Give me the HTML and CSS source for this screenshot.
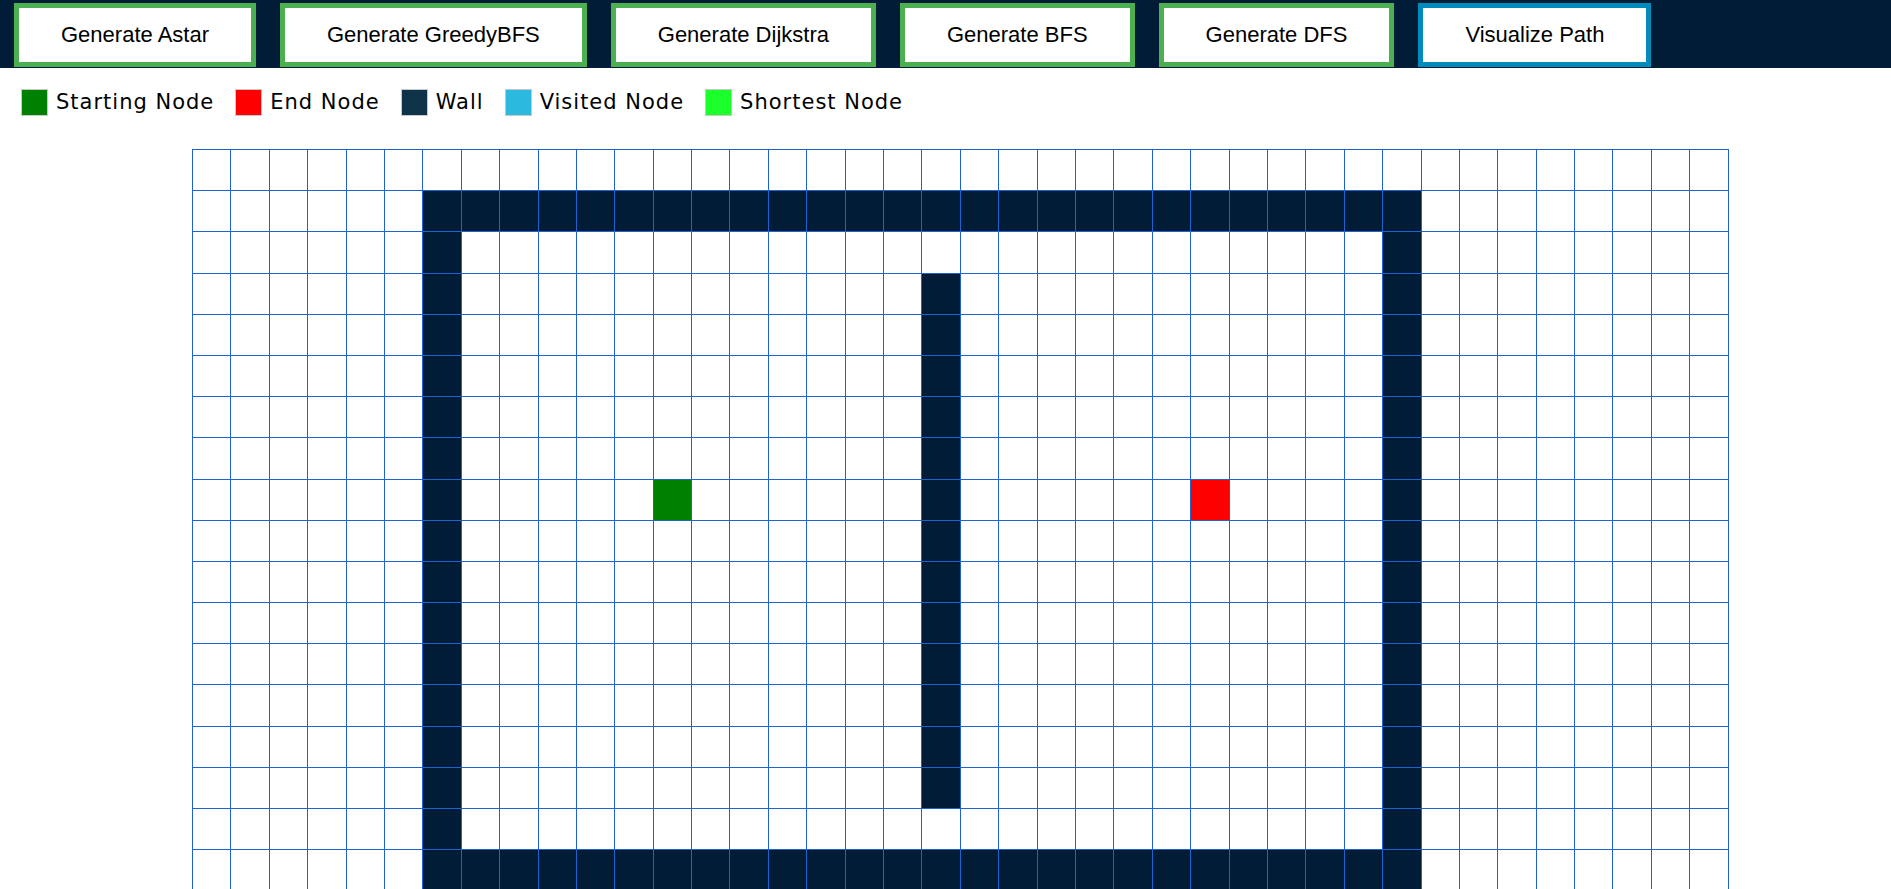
FILE: index.html
```html
<!DOCTYPE html>
<html lang="en">
<head>
<meta charset="utf-8">
<title>Path Visualizer</title>
<link rel="stylesheet" href="styles.css">
</head>
<body>
<header class="topbar">
  <button class="btn btn-green">Generate Astar</button>
  <button class="btn btn-green">Generate GreedyBFS</button>
  <button class="btn btn-green">Generate Dijkstra</button>
  <button class="btn btn-green">Generate BFS</button>
  <button class="btn btn-green">Generate DFS</button>
  <button class="btn btn-blue">Visualize Path</button>
</header>
<div class="legend">
  <div class="legend-item"><span class="swatch swatch-start"></span><span class="legend-label">Starting Node</span></div>
  <div class="legend-item"><span class="swatch swatch-end"></span><span class="legend-label">End Node</span></div>
  <div class="legend-item"><span class="swatch swatch-wall"></span><span class="legend-label">Wall</span></div>
  <div class="legend-item"><span class="swatch swatch-visited"></span><span class="legend-label">Visited Node</span></div>
  <div class="legend-item"><span class="swatch swatch-shortest"></span><span class="legend-label">Shortest Node</span></div>
</div>
<div class="board" id="board"></div>
<script src="script.js"></script>
</body>
</html>
```

FILE: styles.css
```css
html, body {
  margin: 0;
  padding: 0;
  background: #ffffff;
}

body {
  font-family: "Liberation Sans", Arial, sans-serif;
  color: #000;
}

.topbar {
  display: flex;
  align-items: flex-start;
  gap: 24px;
  height: 68px;
  box-sizing: border-box;
  padding: 3px 0 0 14px;
  background: #011c37;
}

.btn {
  box-sizing: border-box;
  height: 64px;
  padding: 0 42px;
  background: #ffffff;
  color: #000;
  font-family: "Liberation Sans", Arial, sans-serif;
  font-size: 22px;
  border: 5px solid #4caf50;
  border-radius: 0;
  cursor: pointer;
}

.btn-blue {
  border-color: #008cba;
}

.legend {
  display: flex;
  align-items: center;
  gap: 21px;
  padding: 21px 0 0 21px;
  height: 27px;
}

.legend-item {
  display: flex;
  align-items: center;
  gap: 8px;
}

.swatch {
  display: block;
  width: 25px;
  height: 25px;
  border: 1px solid #c8c8c8;
}

.swatch-start { background: #008000; }
.swatch-end { background: #ff0000; }
.swatch-wall { background: #0e3247; }
.swatch-visited { background: #2bb9e0; }
.swatch-shortest { background: #1bff2b; }

.legend-label {
  font-family: "DejaVu Sans", "Inter", sans-serif;
  font-size: 21px;
  letter-spacing: 1px;
  line-height: 27px;
  color: #000;
}

.board {
  display: grid;
  grid-template-columns: repeat(40, 38.4px);
  grid-auto-rows: 41.2px;
  width: max-content;
  margin: 33px 0 0 192px;
  border-top: 1px solid #1e62d2;
  border-left: 1px solid #1e62d2;
}

.cell {
  box-sizing: border-box;
  border-right: 1px solid #1e62d2;
  border-bottom: 1px solid #1e62d2;
  background: #ffffff;
}

.cell-wall { background: #011c37; }
.cell-start { background: #008000; }
.cell-end { background: #ff0000; }
```

FILE: script.js
```js
(function () {
  var ROWS = 19, COLS = 40;
  var board = document.getElementById('board');
  function isWall(r, c) {
    if ((r === 1 || r === 17) && c >= 6 && c <= 31) return true;
    if ((c === 6 || c === 31) && r >= 1 && r <= 17) return true;
    if (c === 19 && r >= 3 && r <= 15) return true;
    return false;
  }
  var frag = document.createDocumentFragment();
  for (var r = 0; r < ROWS; r++) {
    for (var c = 0; c < COLS; c++) {
      var d = document.createElement('div');
      d.className = 'cell';
      if (r === 8 && c === 12) d.className += ' cell-start';
      else if (r === 8 && c === 26) d.className += ' cell-end';
      else if (isWall(r, c)) d.className += ' cell-wall';
      frag.appendChild(d);
    }
  }
  board.appendChild(frag);
})();
```
